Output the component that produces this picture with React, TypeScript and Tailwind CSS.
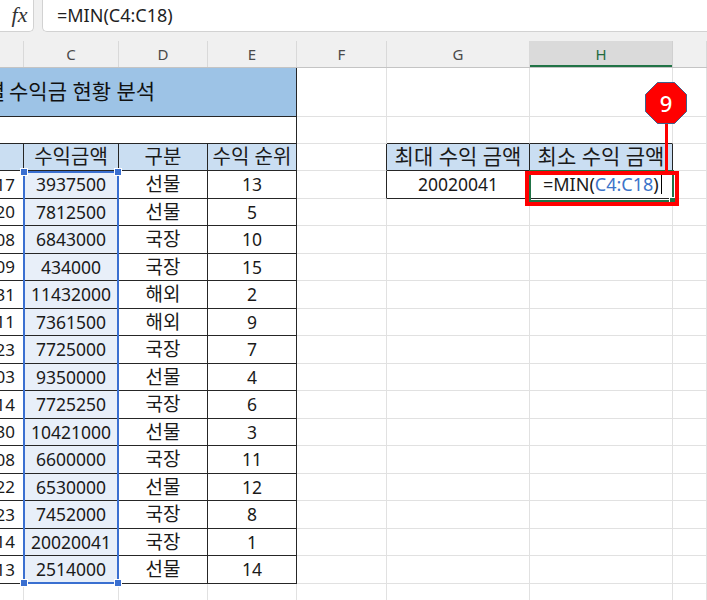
import React from "react";

// column widths (include the 1px right border)
const COLS = [
  { key: "B", w: "w-[24px]" },
  { key: "C", w: "w-[95px]" },
  { key: "D", w: "w-[89px]" },
  { key: "E", w: "w-[89px]" },
  { key: "F", w: "w-[90px]" },
  { key: "G", w: "w-[143px]" },
  { key: "H", w: "w-[143px]" },
  { key: "I", w: "w-[34px]" },
];

const cell = "shrink-0 flex items-center justify-center border-r border-b whitespace-nowrap";
const grid = "border-[#e1e1e1]";
const line = "border-[#262626]";
const headFill = "bg-[#cadef2]";

const data: [string, string, string, string][] = [
  ["2023-05-17", "3937500", "선물", "13"],
  ["2023-05-20", "7812500", "선물", "5"],
  ["2023-06-08", "6843000", "국장", "10"],
  ["2023-06-09", "434000", "국장", "15"],
  ["2023-07-31", "11432000", "해외", "2"],
  ["2023-08-11", "7361500", "해외", "9"],
  ["2023-08-23", "7725000", "국장", "7"],
  ["2023-09-03", "9350000", "선물", "4"],
  ["2023-09-14", "7725250", "국장", "6"],
  ["2023-09-30", "10421000", "선물", "3"],
  ["2023-10-08", "6600000", "국장", "11"],
  ["2023-10-22", "6530000", "선물", "12"],
  ["2023-11-23", "7452000", "국장", "8"],
  ["2023-12-14", "20020041", "국장", "1"],
  ["2023-12-13", "2514000", "선물", "14"],
];

const RightGrid: React.FC<{ from?: number }> = ({ from = 4 }) => (
  <>
    {COLS.slice(from).map((c) => (
      <div key={c.key} className={`${cell} ${grid} ${c.w}`} />
    ))}
  </>
);

export default function App() {
  return (
    <div className="relative w-[707px] h-[600px] overflow-hidden bg-white font-['Noto_Sans','Noto_Sans_CJK_KR',sans-serif] text-[#1a1a1a]">
      {/* Formula bar */}
      <div className="flex h-[41px] items-start gap-[8px] bg-[#f0f0f0]">
        <div className="flex h-[32px] w-[34px] shrink-0 items-center justify-center rounded-br-[5px] border-r border-b border-[#d2d2d2] bg-white pl-[6px] pb-[3px] font-['Liberation_Serif',serif] text-[22px] italic text-[#333]">
          fx
        </div>
        <div className="flex h-[32px] flex-1 items-center rounded-bl-[5px] border-l border-b border-[#d2d2d2] bg-white pl-[14px] pb-[1px] text-[18px] text-[#1f1f1f]">
          =MIN(C4:C18)
        </div>
      </div>

      {/* Column headers */}
      <div className="flex h-[27px] border-b border-[#c4c4c4] bg-[#f0f0f0]">
        {COLS.map((c) =>
          c.key === "H" ? (
            <div
              key={c.key}
              className={`${c.w} shrink-0 flex items-center justify-center border-r border-[#d0d0d0] bg-[#dadada] text-[15px] text-[#1f6b40] shadow-[inset_0_-2px_0_#217346]`}
            >
              {c.key}
            </div>
          ) : (
            <div
              key={c.key}
              className={`${c.w} shrink-0 flex items-center justify-center border-r border-[#d9d9d9] text-[15px] text-[#4a4a4a]`}
            >
              {c.key === "B" || c.key === "I" ? "" : c.key}
            </div>
          )
        )}
      </div>

      {/* Title row */}
      <div className="flex h-[49px]">
        <div className={`${cell} ${line} w-[297px] justify-start overflow-hidden bg-[#9dc3e6] text-[21px] text-[#111]`}>
          <div className="flex w-[5px] shrink-0 justify-end">
            <span>종목별</span>
          </div>
          <span className="pl-[4px]">수익금 현황 분석</span>
        </div>
        <RightGrid />
      </div>

      {/* Empty row */}
      <div className="flex h-[27px]">
        <div className={`${cell} ${line} w-[297px] bg-white`} />
        <div className={`${cell} ${grid} w-[90px]`} />
        <div className={`${cell} w-[143px] border-r-[#e1e1e1] border-b-[#262626]`} />
        <div className={`${cell} w-[143px] border-r-[#e1e1e1] border-b-[#262626]`} />
        <div className={`${cell} ${grid} w-[34px]`} />
      </div>

      {/* Table headers */}
      <div className="flex h-[27px] text-[20px]">
        <div className={`${cell} ${line} ${headFill} w-[24px]`} />
        <div className={`${cell} ${line} ${headFill} w-[95px]`}>수익금액</div>
        <div className={`${cell} ${line} ${headFill} w-[89px]`}>구분</div>
        <div className={`${cell} ${line} ${headFill} w-[89px]`}>수익 순위</div>
        <div className={`${cell} w-[90px] border-r-[#262626] border-b-[#e1e1e1]`} />
        <div className={`${cell} ${line} ${headFill} w-[143px] text-[21px]`}>최대 수익 금액</div>
        <div className={`${cell} ${line} ${headFill} w-[143px] text-[21px]`}>최소 수익 금액</div>
        <div className={`${cell} ${grid} w-[34px]`} />
      </div>

      {/* Data rows */}
      {data.map(([date, amount, kind, rank], i) => (
        <div key={i} className="flex h-[27.5px] text-[17.5px]">
          <div className={`${cell} ${line} w-[24px] justify-end overflow-hidden pr-[8px] text-[17px]`}>
            <span>{date}</span>
          </div>
          <div className={`${cell} ${line} w-[95px] bg-[#e8eff9]`}>{amount}</div>
          <div className={`${cell} ${line} w-[89px] text-[19px]`}>{kind}</div>
          <div className={`${cell} ${line} w-[89px]`}>{rank}</div>
          {i === 0 ? (
            <>
              <div className={`${cell} w-[90px] border-r-[#262626] border-b-[#e1e1e1]`} />
              <div className={`${cell} ${line} w-[143px]`}>20020041</div>
              <div className={`${cell} ${line} w-[143px] justify-start pl-[13px] text-[18px]`}>
                <span>=MIN(</span>
                <span className="text-[#3d74c9]">C4:C18</span>
                <span>)</span>
                <span className="ml-[2px] h-[20px] w-px bg-black" />
              </div>
              <div className={`${cell} ${grid} w-[34px]`} />
            </>
          ) : (
            <RightGrid />
          )}
        </div>
      ))}

      {/* Trailing row */}
      <div className="flex h-[40px]">
        <RightGrid from={0} />
      </div>

      {/* Referenced range highlight */}
      <div className="absolute left-[23px] top-[171px] h-[413px] w-[96px] border-2 border-[#3a6fd0]" />
      <div className="absolute left-[21px] top-[169px] h-[6px] w-[6px] bg-[#3a6fd0] outline outline-1 outline-white" />
      <div className="absolute left-[115px] top-[169px] h-[6px] w-[6px] bg-[#3a6fd0] outline outline-1 outline-white" />
      <div className="absolute left-[21px] top-[580px] h-[6px] w-[6px] bg-[#3a6fd0] outline outline-1 outline-white" />
      <div className="absolute left-[115px] top-[580px] h-[6px] w-[6px] bg-[#3a6fd0] outline outline-1 outline-white" />

      {/* Active cell */}
      <div className="absolute left-[529px] top-[170px] h-[32px] w-[145px] border-2 border-[#217346]" />
      <div className="absolute left-[670px] top-[198px] h-[6px] w-[6px] bg-[#217346] outline outline-1 outline-white" />

      {/* Callout */}
      <div className="absolute left-[525px] top-[171px] h-[35px] w-[154px] border-4 border-[#ff0000]" />
      <div className="absolute left-[665px] top-[120px] h-[52px] w-[3px] bg-[#ff0000]" />
      <div className="absolute left-[645px] top-[82px] flex h-[42px] w-[42px] items-center justify-center">
        <svg className="absolute inset-0" width="42" height="42" viewBox="0 0 42 42">
          <polygon
            points="12.5,0.5 29.5,0.5 41.5,12.5 41.5,29.5 29.5,41.5 12.5,41.5 0.5,29.5 0.5,12.5"
            fill="#ff0000"
            stroke="#3f5f8a"
            strokeWidth="1"
          />
        </svg>
        <span className="relative text-[22px] font-medium leading-none text-white">9</span>
      </div>
    </div>
  );
}
